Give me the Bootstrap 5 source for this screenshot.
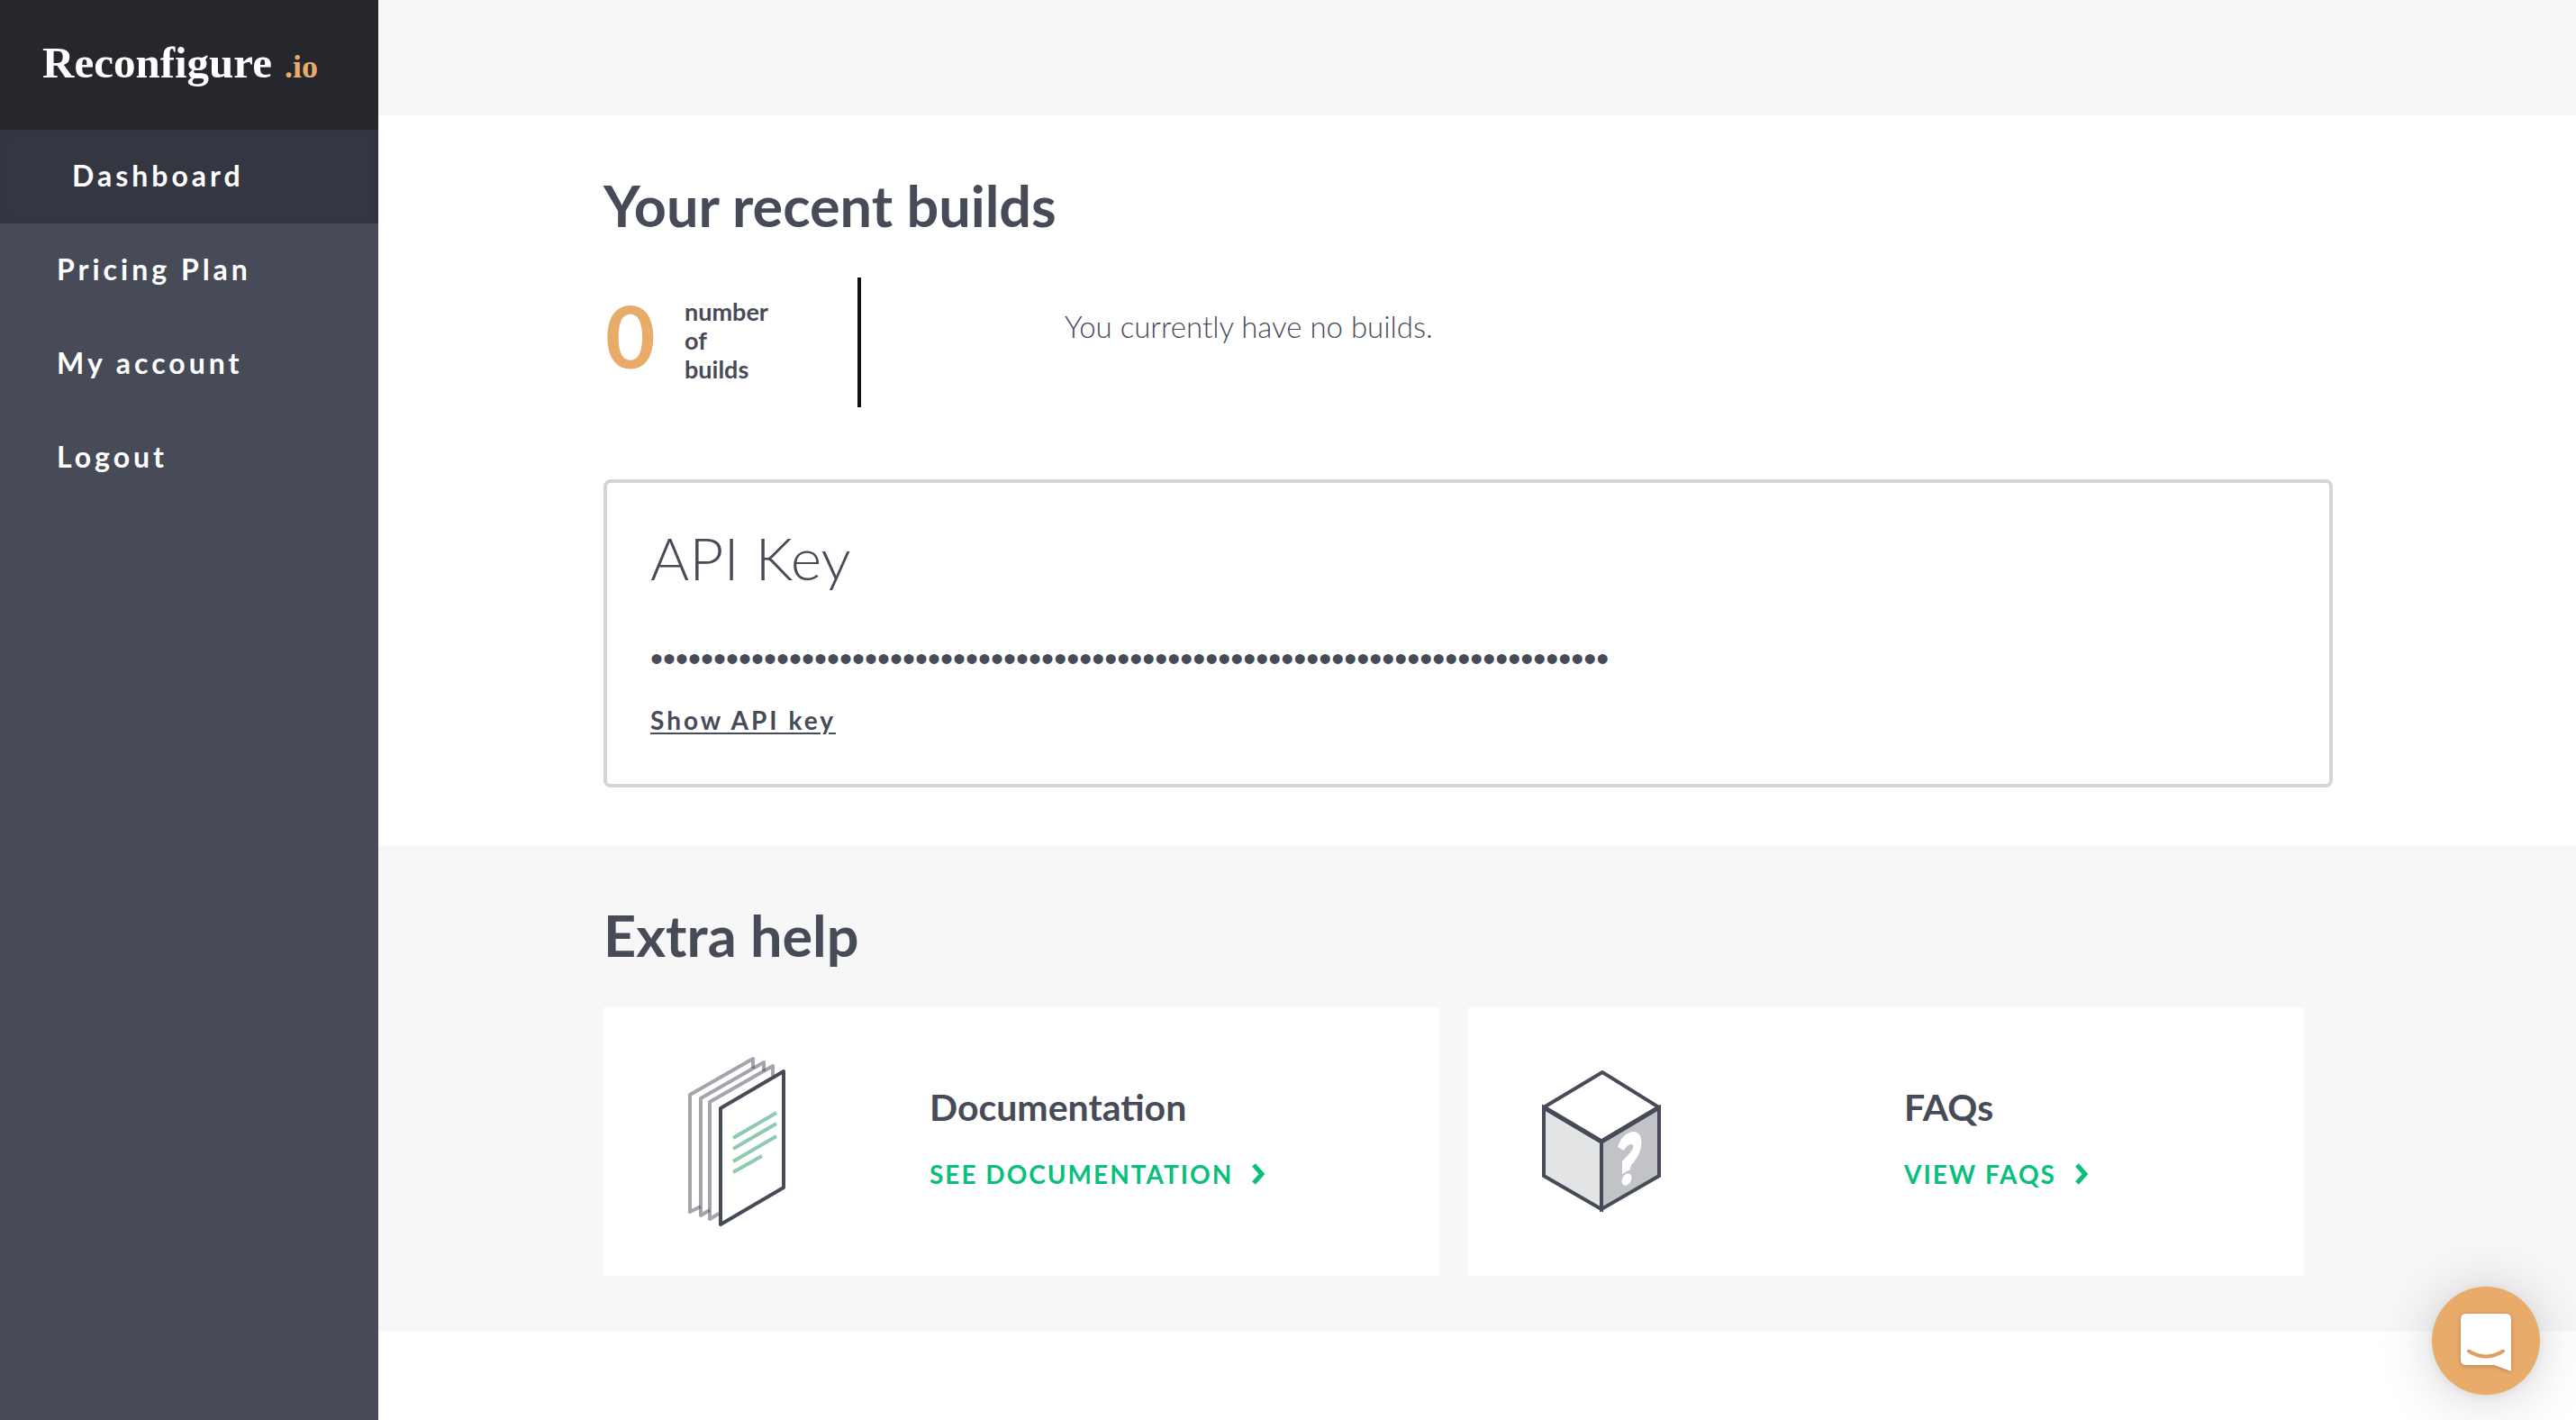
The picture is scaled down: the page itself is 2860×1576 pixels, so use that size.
<!DOCTYPE html>
<html lang="en">
<head>
<meta charset="utf-8">
<meta name="viewport" content="width=device-width, initial-scale=1">
<title>Dashboard</title>
<link href="https://cdn.jsdelivr.net/npm/bootstrap@5.3.0/dist/css/bootstrap.min.css" rel="stylesheet">
<style>
  body { font-family: Lato, "Open Sans", sans-serif; color: #474b58; background: #fff; }
  .side { flex: 0 0 420px; background: #474b58; }
  .brand { height: 144px; padding: 0 47px; background: #26272c; font-family: "Liberation Serif", serif; font-weight: 700; font-size: 49px; line-height: 140px; color: #fff; }
  .brand:hover { color: #fff; }
  .brand-tld { font-size: 36px; color: #e8ab6a; margin-left: 14px; }
  .side .nav-link { height: 104px; padding: 0 63px; font-size: 32px; line-height: 102px; letter-spacing: 4px; font-weight: 700; color: #fff; }
  .side .nav-link.active { padding-left: 80px; background: #343641; box-shadow: inset 0 0 8px #30333f; }
  .topbar { height: 128px; background: #f7f7f7; }
  .band { padding: 60px 270px 64px 250px; }
  .band-help { background: #f7f7f7; padding-bottom: 62px; }
  .title { font-size: 63px; line-height: 80px; font-weight: 700; margin: 0 0 40px; }
  .stat { width: 286px; height: 144px; border-right: 4px solid #111; }
  .stat-num { width: 90px; padding-left: 2px; font-size: 96px; line-height: 128px; font-weight: 700; color: #e8ab6a; }
  .stat-label { width: 110px; padding-top: 22px; font-size: 27px; line-height: 32px; font-weight: 700; }
  .stat-empty { padding: 34px 0 0 226px; font-size: 33px; line-height: 40px; font-weight: 300; }
  .keybox { margin-top: 80px; border: 4px solid #d5d5d3; border-radius: 8px; padding: 43px 48px 51px; }
  .keybox h2 { font-size: 66px; line-height: 80px; font-weight: 300; margin: 0 0 48px; }
  .keydots { font-family: "Liberation Sans", sans-serif; font-size: 40px; line-height: 48px; margin: 0 0 24px; }
  .showkey { font-size: 28px; line-height: 40px; letter-spacing: 3px; font-weight: 700; color: #474b58; text-underline-offset: 3px; text-decoration-thickness: 2px; }
  .helps { gap: 32px; padding-right: 32px; }
  .help { flex: 1 1 0; height: 298px; background: #fff; }
  .help-icon { width: 296px; }
  .help h3 { font-size: 41px; line-height: 48px; font-weight: 700; margin: 0 0 30px; }
  .help a { font-size: 28px; line-height: 40px; letter-spacing: 2px; font-weight: 700; color: #0abf7c; }
  .help a svg { margin-left: 20px; }
  .ps-doc { padding: 0 0 6px 66px; }
  .ps-faq { padding: 0 0 6px 188px; }
  .chat { right: 40px; bottom: 28px; width: 120px; height: 120px; background: #e8ab6a; box-shadow: 0 2px 12px rgba(0,0,0,.08), 0 4px 64px rgba(0,0,0,.18); }
</style>
</head>
<body>
<div class="d-flex min-vh-100">
  <aside class="side">
    <a class="brand d-block text-decoration-none" href="#">Reconfigure<span class="brand-tld">.io</span></a>
    <nav class="nav flex-column">
      <a class="nav-link active" aria-current="page" href="#">Dashboard</a>
      <a class="nav-link" href="#">Pricing Plan</a>
      <a class="nav-link" href="#">My account</a>
      <a class="nav-link" href="#">Logout</a>
    </nav>
  </aside>
  <main class="flex-grow-1">
    <div class="topbar"></div>
    <section class="band">
      <h1 class="title">Your recent builds</h1>
      <div class="d-flex">
        <div class="stat d-flex">
          <div class="stat-num">0</div>
          <div class="stat-label">number<br>of<br>builds</div>
        </div>
        <p class="stat-empty mb-0">You currently have no builds.</p>
      </div>
      <div class="keybox">
        <h2>API Key</h2>
        <p class="keydots">••••••••••••••••••••••••••••••••••••••••••••••••••••••••••••••••••••••••••••</p>
        <button type="button" class="showkey btn-link d-block border-0 bg-transparent p-0 text-decoration-underline">Show API key</button>
      </div>
    </section>
    <section class="band band-help">
      <h1 class="title">Extra help</h1>
      <div class="helps d-flex">
        <div class="help d-flex align-items-center">
          <div class="help-icon d-flex justify-content-center">
            <svg width="110" height="190" viewBox="763 1171 110 190" fill="none" stroke-width="4" stroke-linejoin="round" aria-hidden="true">
              <g stroke="#474b58" stroke-opacity=".5">
                <path d="M778 1338L766 1344V1214L836 1174V1185"/>
                <path d="M788 1342L778 1348V1218L848 1178V1188"/>
                <path d="M798 1346L788 1352V1222L858 1182V1193"/>
              </g>
              <path d="M800 1229L870 1188V1317L800 1358Z" fill="#fff" stroke="#474b58"/>
              <path d="M814 1262L862 1234M814 1274L862 1246M814 1288L862 1260M814 1300L846 1282" stroke="#8ccbaf"/>
            </svg>
          </div>
          <div class="ps-doc">
            <h3>Documentation</h3>
            <a class="d-flex align-items-center text-decoration-none" href="#">SEE DOCUMENTATION
              <svg width="16" height="24" viewBox="0 0 16 24" fill="none" stroke="#0abf7c" stroke-width="5" aria-hidden="true"><path d="M3 2L12 12L3 22"/></svg>
            </a>
          </div>
        </div>
        <div class="help d-flex align-items-center">
          <div class="help-icon d-flex justify-content-center">
            <svg width="132" height="158" viewBox="1712 1188 132 158" stroke="#474b58" stroke-width="4" aria-hidden="true">
              <path d="M1714 1229L1778 1267V1342L1714 1305Z" fill="#e3e4e6"/>
              <path d="M1778 1267L1842 1229V1305L1778 1342Z" fill="#c2c3c7"/>
              <path d="M1714 1229L1779 1190L1842 1229L1778 1267Z" fill="#fff"/>
              <path d="M1714 1229L1778 1267L1842 1229" fill="none" stroke-width="5"/>
              <path d="M1796 1273Q1801 1257 1814 1256C1826 1257 1823 1276 1818 1284C1814 1291 1810 1292 1810 1298L1801 1303V1289C1806 1283 1815 1276 1813 1271C1810 1268 1805 1273 1803 1277Z" fill="#fff" stroke="none"/>
              <ellipse cx="1806" cy="1309" rx="5" ry="7" transform="rotate(28 1806 1309)" fill="#fff" stroke="none"/>
            </svg>
          </div>
          <div class="ps-faq">
            <h3>FAQs</h3>
            <a class="d-flex align-items-center text-decoration-none" href="#">VIEW FAQS
              <svg width="16" height="24" viewBox="0 0 16 24" fill="none" stroke="#0abf7c" stroke-width="5" aria-hidden="true"><path d="M3 2L12 12L3 22"/></svg>
            </a>
          </div>
        </div>
      </div>
    </section>
  </main>
</div>
<button type="button" class="chat position-fixed rounded-circle border-0 p-0" aria-label="Open chat">
  <svg class="d-block" width="120" height="120" viewBox="0 0 120 120" aria-hidden="true">
    <path d="M38 30H82Q88 30 88 36V94L69 87H38Q32 87 32 81V36Q32 30 38 30Z" fill="#fff" style="filter: drop-shadow(0 1px 2px rgba(0,0,0,.25))"/>
    <path d="M41 71.500Q60 83.500 79 71.500" fill="none" stroke="#dda063" stroke-width="4" stroke-linecap="round"/>
  </svg>
</button>
<script src="https://cdn.jsdelivr.net/npm/bootstrap@5.3.0/dist/js/bootstrap.bundle.min.js"></script>
</body>
</html>
